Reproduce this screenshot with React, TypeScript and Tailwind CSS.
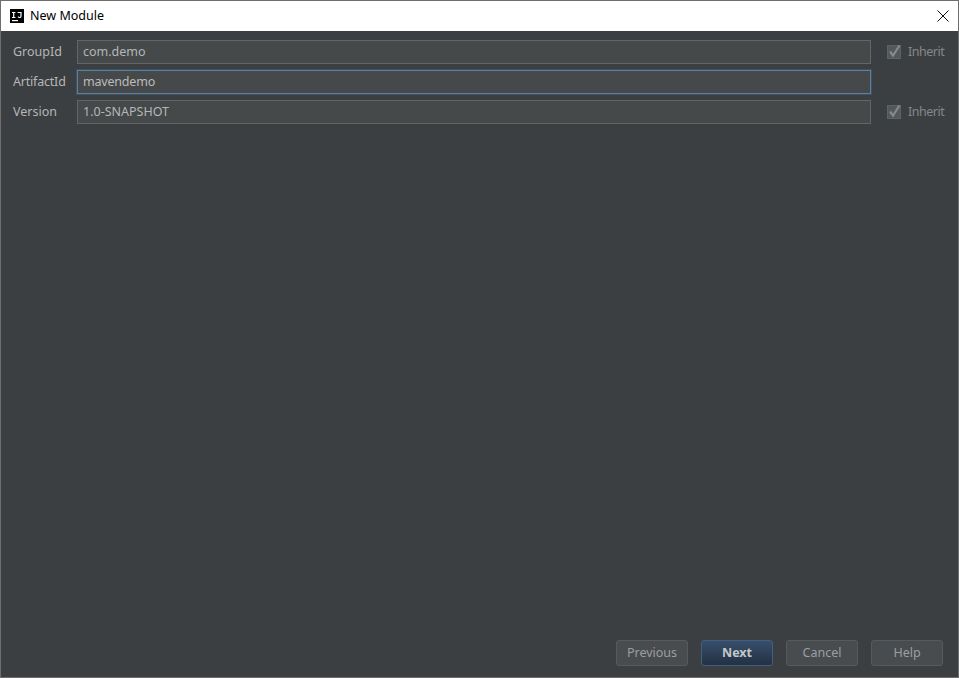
import React from "react";

const font = "font-['Noto_Sans','Liberation_Sans',sans-serif]";

const InheritCheck = () => (
  <div className="flex items-center w-[73px] pl-[16px] gap-[7px] shrink-0">
    <svg width="14" height="14" viewBox="0 0 14 14" className="shrink-0">
      <rect x="0.5" y="0.5" width="13" height="13" fill="#53585a" stroke="#5e6264" />
      <path d="M3 6.5 L6 10.5 L12.5 0.5" fill="none" stroke="#84898b" strokeWidth="2.2" />
    </svg>
    <span className="text-[12.5px] tracking-[-0.5px] text-[#85888a] leading-none">Inherit</span>
  </div>
);

const Field = ({
  label,
  value,
  focused,
  inherit,
}: {
  label: string;
  value: string;
  focused?: boolean;
  inherit?: boolean;
}) => (
  <div className="flex items-center h-[24px]">
    <label
      className={
        focused
          ? "w-[64px] shrink-0 text-[12.5px] tracking-[-0.2px] text-[#b4b6b7] leading-[24px]"
          : "w-[64px] shrink-0 text-[12.5px] text-[#b4b6b7] leading-[24px]"
      }
    >
      {label}
    </label>
    <div
      className={
        focused
          ? "flex-1 h-[24px] flex items-center px-[5px] bg-[#45494a] border border-[#5b7f9f] shadow-[0_0_0_1px_#3f5264] text-[12.5px] tracking-[-0.2px] text-[#bbbbbb]"
          : "flex-1 h-[24px] flex items-center px-[5px] bg-[#45494a] border border-[#646464] text-[12.5px] text-[#b4b6b7]"
      }
    >
      {value}
    </div>
    {inherit ? <InheritCheck /> : <div className="w-[73px] shrink-0" />}
  </div>
);

const FooterButton = ({ text, primary }: { text: string; primary?: boolean }) => (
  <button
    className={
      primary
        ? "w-[72px] h-[26px] rounded-[3px] border border-[#3f6080] bg-gradient-to-b from-[#384f6b] to-[#233143] text-[12.5px] font-bold text-[#c4c7c9]"
        : "w-[72px] h-[26px] rounded-[3px] border border-[#565a5b] bg-[#484c4e] text-[12.5px] text-[#9c9fa1]"
    }
  >
    {text}
  </button>
);

export default function App() {
  return (
    <div className={`${font} w-[959px] h-[678px] flex flex-col border border-[#6e6e6e] bg-[#3c3f41]`}>
      <div className="h-[30px] shrink-0 bg-white flex items-center pl-[9px] pr-[9px]">
        <svg width="14" height="14" viewBox="0 0 14 14" className="shrink-0">
          <rect width="14" height="14" fill="#000" />
          <rect x="2" y="11" width="6" height="1.2" fill="#fff" />
          <path d="M2 3h3.4v1.1h-1.1v3.8h1.1V9H2V7.9h1.1V4.1H2z" fill="#fff" />
          <path d="M7.6 3h4v4c0 1.3-.8 2.1-2 2.1-.9 0-1.6-.4-2-1.1l.8-.8c.3.5.7.8 1.1.8.5 0 .9-.3.9-1V4.1H7.6z" fill="#fff" />
        </svg>
        <span className="ml-[6px] text-[12.5px] text-black leading-none">New Module</span>
        <svg width="12" height="12" viewBox="0 0 12 12" className="ml-auto">
          <path d="M0.5 0.5 L11.5 11.5 M11.5 0.5 L0.5 11.5" stroke="#111" strokeWidth="1" fill="none" />
        </svg>
      </div>

      <div className="flex-1 flex flex-col pl-[12px] pr-[14px]">
        <div className="flex flex-col gap-[6px] pt-[9px]">
          <Field label="GroupId" value="com.demo" inherit />
          <Field label="ArtifactId" value="mavendemo" focused />
          <Field label="Version" value="1.0-SNAPSHOT" inherit />
        </div>
        <div className="mt-auto flex justify-end gap-[13px] pb-[11px] pr-[1px]">
          <FooterButton text="Previous" />
          <FooterButton text="Next" primary />
          <FooterButton text="Cancel" />
          <FooterButton text="Help" />
        </div>
      </div>
    </div>
  );
}
